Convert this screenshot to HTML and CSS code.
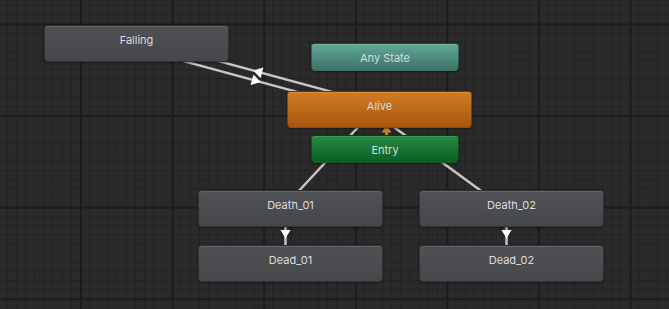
FILE: index.html
```html
<!DOCTYPE html>
<html>
<head>
<meta charset="utf-8">
<link rel="stylesheet" href="styles.css">
</head>
<body>
<div class="canvas">
  <svg class="edges" width="669" height="309" viewBox="0 0 669 309">
    <g class="edge">
      <line x1="134.8" y1="47.9" x2="378.3" y2="113.9"/>
      <line x1="137.2" y1="39.1" x2="380.7" y2="105.1"/>
      <line x1="362" y1="123" x2="296" y2="194"/>
      <line x1="389" y1="123.6" x2="486" y2="194.4"/>
      <line x1="285.5" y1="226" x2="285.5" y2="246"/>
      <line x1="506.5" y1="226" x2="506.5" y2="246"/>
    </g>
    <g class="arrow">
      <polygon points="253.3,70.5 260.6,78.2 263.4,67.6"/>
      <polygon points="260.7,82.1 250.6,85 253.4,74.4"/>
      <polygon points="280.5,230 290.5,230 285.5,238.5"/>
      <polygon points="501.5,230 511.5,230 506.5,238.5"/>
    </g>
    <g class="entry-arrow">
      <polygon points="386.5,125 381.5,132.5 391.5,132.5"/>
      <rect x="385" y="132" width="3" height="3.5"/>
    </g>
  </svg>

  <div class="node gray tall" style="left:44px;top:25px;width:185px">Falling</div>
  <div class="node any" style="left:311px;top:43px;width:148px">Any State</div>
  <div class="node alive tall" style="left:287px;top:91px;width:185px">Alive</div>
  <div class="node entry" style="left:311px;top:135px;width:148px">Entry</div>
  <div class="node gray tall" style="left:198px;top:190px;width:185px">Death_01</div>
  <div class="node gray tall" style="left:419px;top:190px;width:185px">Death_02</div>
  <div class="node gray tall" style="left:198px;top:245px;width:185px">Dead_01</div>
  <div class="node gray tall" style="left:419px;top:245px;width:185px">Dead_02</div>
</div>
</body>
</html>
```

FILE: styles.css
```css
html, body {
  margin: 0;
  padding: 0;
  width: 669px;
  height: 309px;
  overflow: hidden;
  background: #292929;
}

.canvas {
  position: relative;
  width: 669px;
  height: 309px;
  background-color: #2a2a2a;
  background-image:
    linear-gradient(to right, #1c1c1c 2px, transparent 2px),
    linear-gradient(to bottom, #1c1c1c 2px, transparent 2px),
    linear-gradient(to right, #222222 1px, transparent 1px),
    linear-gradient(to bottom, #222222 1px, transparent 1px);
  background-size: 91.6px 91.6px, 91.6px 91.6px, 9.16px 9.16px, 9.16px 9.16px;
  background-position: 80px 23.5px, 80px 23.5px, 6.7px 5.2px, 6.7px 5.2px;
  font-family: Inter, "Noto Sans", sans-serif;
}

.edges {
  position: absolute;
  left: 0;
  top: 0;
}

.edge line {
  stroke: #c6c6c6;
  stroke-width: 2.5;
}

.arrow polygon {
  fill: #ffffff;
}

.entry-arrow polygon,
.entry-arrow rect {
  fill: #c7851c;
}

.node {
  position: absolute;
  box-sizing: border-box;
  height: 28px;
  padding-top: 7px;
  line-height: 14px;
  font-size: 11px;
  color: #dcdcdc;
  text-align: center;
  border-radius: 4px;
  border: 1px solid rgba(0, 0, 0, 0.35);
  box-shadow: inset 0 1px 0 rgba(255, 255, 255, 0.12), 0 1px 2px rgba(0, 0, 0, 0.45);
}

.node.tall {
  height: 37px;
}

.gray {
  background: linear-gradient(to bottom, #4f5155, #45474b);
}

.any {
  background: linear-gradient(to bottom, #61a999, #3c7266);
}

.alive {
  background: linear-gradient(to bottom, #d27c24, #a6560e);
}

.entry {
  background: linear-gradient(to bottom, #268c40, #0b5e25);
}
```
